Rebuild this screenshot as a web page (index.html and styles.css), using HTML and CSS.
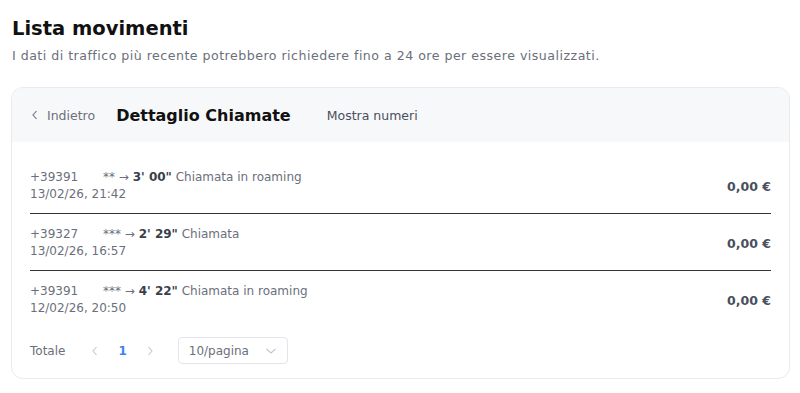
FILE: index.html
```html
<!DOCTYPE html>
<html lang="it">
<head>
    <meta charset="UTF-8">
    <meta name="viewport" content="width=device-width, initial-scale=1.0">
    <title>Lista movimenti</title>
    <link rel="stylesheet" href="styles.css">
</head>
<body>
    <div class="page">
        <h1 class="title">Lista movimenti</h1>
        <p class="subtitle">I dati di traffico più recente potrebbero richiedere fino a 24 ore per essere visualizzati.</p>

        <div class="card">
            <div class="card-head">
                <a class="back" href="#">
                    <svg width="8" height="10" viewBox="0 0 8 10"><path d="M5.5 1 L2 5 L5.5 9" fill="none" stroke="#6b6f7b" stroke-width="1.1"/></svg>
                    Indietro
                </a>
                <h2 class="head-title">Dettaglio Chiamate</h2>
                <span class="toggle">Mostra numeri</span>
            </div>

            <div class="calls">
                <div class="call">
                    <div class="call-info">
                        <div class="call-line"><span class="num">+39391</span><span class="mask">**</span> → <b>3' 00"</b> Chiamata in roaming</div>
                        <div class="call-date">13/02/26, 21:42</div>
                    </div>
                    <div class="amount">0,00 €</div>
                </div>
                <div class="call">
                    <div class="call-info">
                        <div class="call-line"><span class="num">+39327</span><span class="mask">***</span> → <b>2' 29"</b> Chiamata</div>
                        <div class="call-date">13/02/26, 16:57</div>
                    </div>
                    <div class="amount">0,00 €</div>
                </div>
                <div class="call">
                    <div class="call-info">
                        <div class="call-line"><span class="num">+39391</span><span class="mask">***</span> → <b>4' 22"</b> Chiamata in roaming</div>
                        <div class="call-date">12/02/26, 20:50</div>
                    </div>
                    <div class="amount">0,00 €</div>
                </div>
            </div>

            <div class="pager">
                <span class="total">Totale</span>
                <svg class="arrow" width="8" height="10" viewBox="0 0 8 10"><path d="M5.5 1 L2 5 L5.5 9" fill="none" stroke="#c4c7ce" stroke-width="1.1"/></svg>
                <span class="page-num">1</span>
                <svg class="arrow" width="8" height="10" viewBox="0 0 8 10"><path d="M2.5 1 L6 5 L2.5 9" fill="none" stroke="#c4c7ce" stroke-width="1.1"/></svg>
                <div class="select">
                    <span>10/pagina</span>
                    <svg width="12" height="8" viewBox="0 0 12 8"><path d="M1.5 2 L6 6 L10.5 2" fill="none" stroke="#c4c7ce" stroke-width="1.1"/></svg>
                </div>
            </div>
        </div>
    </div>
</body>
</html>
```

FILE: styles.css
```css
body {
    margin: 0;
    font-family: "DejaVu Sans", sans-serif;
    background: #fff;
    color: #6b6f7b;
}

.page {
    padding: 15px 10px 0 11px;
}

.title {
    margin: 0 0 0 1px;
    font-size: 19.5px;
    font-weight: bold;
    color: #111;
    line-height: 28px;
}

.subtitle {
    margin: 4px 0 0 1px;
    font-size: 12.6px;
    letter-spacing: 0.48px;
    line-height: 18px;
}

.card {
    margin-top: 22px;
    border: 1px solid #e9eaee;
    border-radius: 12px;
    overflow: hidden;
}

.card-head {
    background: #f7f8fa;
    height: 54px;
    display: flex;
    align-items: center;
    padding-left: 19px;
}

.back {
    display: flex;
    align-items: center;
    gap: 8px;
    font-size: 12.5px;
    color: #6b6f7b;
    text-decoration: none;
}

.head-title {
    margin: 0 0 0 21px;
    font-size: 16px;
    font-weight: bold;
    color: #111;
}

.toggle {
    margin-left: 36px;
    font-size: 12.5px;
    color: #4a4f5c;
}

.calls {
    padding: 23px 18px 0 18px;
}

.call {
    display: flex;
    align-items: center;
    justify-content: space-between;
    padding: 4px 0 10px;
    border-bottom: 1px solid #333;
    margin-bottom: 8px;
}

.call:last-child {
    border-bottom: none;
}

.call-line,
.call-date {
    font-size: 12px;
    line-height: 17px;
}

.num {
    display: inline-block;
    width: 73px;
}

.call-line b {
    color: #3a3f4b;
}

.amount {
    font-size: 12.5px;
    font-weight: bold;
    color: #4a4f5c;
}

.pager {
    display: flex;
    align-items: center;
    padding: 2px 18px 14px 18px;
    font-size: 12px;
}

.total {
    margin-right: 26px;
}

.page-num {
    color: #3b82f6;
    font-weight: bold;
    margin: 0 19px;
}

.select {
    margin-left: 24px;
    width: 110px;
    height: 27px;
    box-sizing: border-box;
    border: 1px solid #e3e5ea;
    border-radius: 4px;
    display: flex;
    align-items: center;
    justify-content: space-between;
    padding: 0 10px;
    font-size: 12px;
    color: #6b6f7b;
}
```
